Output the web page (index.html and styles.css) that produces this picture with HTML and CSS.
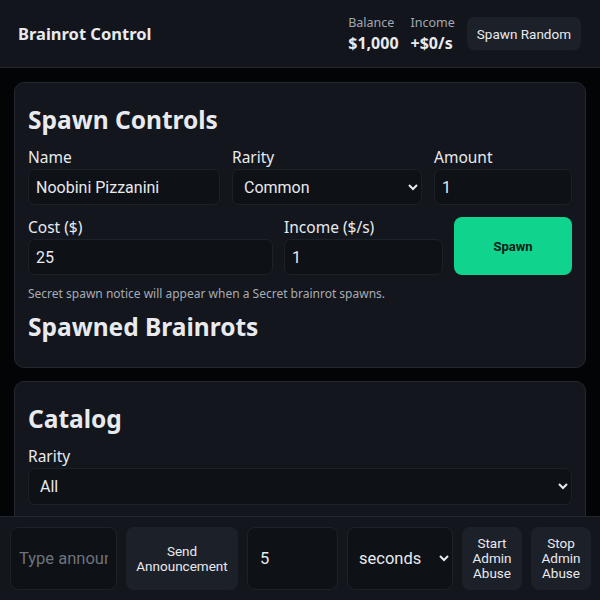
FILE: index.html
```html
<!DOCTYPE html>
<html lang="en">
<head>
<meta charset="utf-8">
<title>Brainrot Control</title>
<link rel="stylesheet" href="styles.css">
</head>
<body>
<header class="topbar">
  <div class="brand">Brainrot Control</div>
  <div class="stats">
    <div class="stat"><span class="stat-label">Balance</span><span class="stat-value">$1,000</span></div>
    <div class="stat"><span class="stat-label">Income</span><span class="stat-value">+$0/s</span></div>
    <button class="btn btn-header">Spawn Random</button>
  </div>
</header>
<main class="page">
  <section class="card">
    <h2 class="card-title">Spawn Controls</h2>
    <div class="row row-1">
      <label class="field"><span class="field-label">Name</span><input class="control" type="text" value="Noobini Pizzanini"></label>
      <label class="field"><span class="field-label">Rarity</span><select class="control"><option>Common</option></select></label>
      <label class="field"><span class="field-label">Amount</span><input class="control" type="text" value="1"></label>
    </div>
    <div class="row row-2">
      <label class="field"><span class="field-label">Cost ($)</span><input class="control" type="text" value="25"></label>
      <label class="field"><span class="field-label">Income ($/s)</span><input class="control" type="text" value="1"></label>
      <button class="btn btn-spawn">Spawn</button>
    </div>
    <p class="notice">Secret spawn notice will appear when a Secret brainrot spawns.</p>
    <h3 class="sub-title">Spawned Brainrots</h3>
  </section>
  <section class="card card-catalog">
    <h2 class="card-title">Catalog</h2>
    <label class="field"><span class="field-label">Rarity</span><select class="control"><option>All</option></select></label>
  </section>
</main>
<footer class="bottombar">
  <input class="control bb-text" type="text" placeholder="Type announcement">
  <button class="btn bb-send">Send<br>Announcement</button>
  <input class="control bb-num" type="text" value="5">
  <select class="control bb-unit"><option>seconds</option></select>
  <button class="btn bb-small">Start<br>Admin<br>Abuse</button>
  <button class="btn bb-small">Stop<br>Admin<br>Abuse</button>
</footer>
</body>
</html>
```
FILE: styles.css
```css
* { box-sizing: border-box; }
html, body { margin: 0; padding: 0; }
body {
  background: #030405;
  color: #e8eaee;
  font-family: "Noto Sans", "Open Sans", sans-serif;
  color-scheme: dark;
  height: 600px;
  overflow: hidden;
}
.topbar {
  height: 68px;
  background: #12151b;
  border-bottom: 1px solid #23272f;
  display: flex;
  align-items: center;
  justify-content: space-between;
  padding: 0 19px 0 18px;
}
.brand { font-weight: 700; font-size: 16.5px; }
.stats { display: flex; align-items: center; gap: 12px; }
.stat { display: flex; flex-direction: column; align-items: flex-start; }
.stat-label { font-size: 12.5px; line-height: 17px; color: #a3a8b1; }
.stat-value { font-size: 16px; line-height: 21px; font-weight: 700; margin-top: 2px; }
.btn {
  font-family: Roboto, sans-serif;
  border: none;
  cursor: pointer;
  color: #e8eaee;
  background: #1c2028;
  border-radius: 7px;
}
.btn-header { height: 33px; padding: 0 10px; font-size: 13.5px; }
.page { padding: 14px 14px 0; display: flex; flex-direction: column; gap: 13px; }
.card {
  background: #13161d;
  border: 1px solid #23272f;
  border-radius: 10px;
  padding: 21px 13px 13px;
}
.card-title { margin: 0 0 11px; font-size: 24.5px; font-weight: 700; line-height: 32px; }
.row { display: grid; align-items: end; }
.row-1 { grid-template-columns: 192px 190px 1fr; gap: 12px; }
.row-2 { grid-template-columns: 245px 159px 1fr; gap: 11px; margin-top: 12px; }
.field { display: flex; flex-direction: column; }
.field-label { font-size: 15.5px; line-height: 20px; margin-bottom: 2px; }
.control {
  font-family: Roboto, sans-serif;
  font-size: 16px;
  color: #e8eaee;
  background: #0e1116;
  border: 1px solid #1d2128;
  border-radius: 7px;
  height: 36px;
  padding: 0 8px 0 7px;
  outline: none;
  width: 100%;
}
select.control { padding: 0 6px 0 7px; }
.card-catalog select.control { height: 37px; }
.btn-spawn {
  height: 58px;
  background: #10d38d;
  color: #0b2118;
  font-weight: 700;
  font-size: 13px;
  border-radius: 8px;
}
.notice { margin: 11px 0 0; font-size: 12px; line-height: 16px; color: #a7acb5; }
.sub-title { margin: 10px 0 12px; font-size: 24.5px; font-weight: 700; line-height: 30px; }
.card-catalog { padding-bottom: 40px; }
.bottombar {
  position: fixed;
  left: 0; right: 0; bottom: 0;
  height: 84px;
  background: #13161d;
  border-top: 1px solid #22262e;
  display: flex;
  align-items: center;
  gap: 9px;
  padding: 0 10px;
}
.bottombar .control, .bottombar .btn { height: 63px; border-radius: 8px; }
.bottombar .control { font-size: 16.5px; }
.bb-text { width: 107px; flex: none; padding: 0 8px; }
.bb-text::placeholder { color: #6e737c; }
.bb-send { width: 112px; flex: none; font-size: 13.5px; line-height: 15px; }
.bb-num { width: 91px; flex: none; padding: 0 12px; }
.bb-unit { width: 106px; flex: none; padding: 0 4px 0 6px; }
.bb-small { width: 60px; flex: none; font-size: 13.5px; line-height: 15px; padding: 0; }
```
